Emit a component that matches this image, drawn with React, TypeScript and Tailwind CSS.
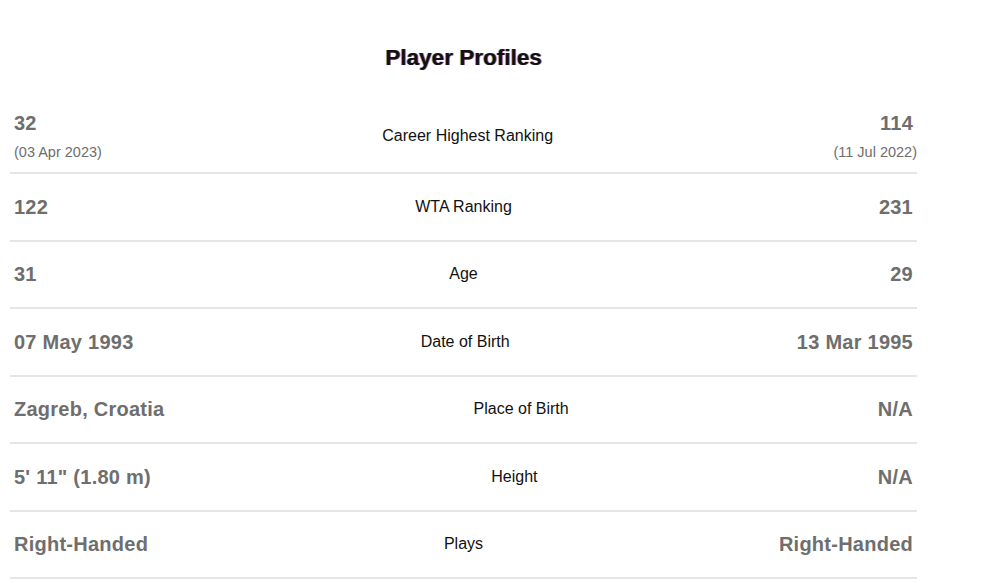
import React from 'react';

type Row = {
  label: string;
  left: string;
  right: string;
  leftSub?: string;
  rightSub?: string;
};

const rows: Row[] = [
  { label: 'Career Highest Ranking', left: '32', right: '114', leftSub: '(03 Apr 2023)', rightSub: '(11 Jul 2022)' },
  { label: 'WTA Ranking', left: '122', right: '231' },
  { label: 'Age', left: '31', right: '29' },
  { label: 'Date of Birth', left: '07 May 1993', right: '13 Mar 1995' },
  { label: 'Place of Birth', left: 'Zagreb, Croatia', right: 'N/A' },
  { label: 'Height', left: '5\' 11" (1.80 m)', right: 'N/A' },
  { label: 'Plays', left: 'Right-Handed', right: 'Right-Handed' },
];

const ProfileRow: React.FC<{ row: Row; first: boolean }> = ({ row, first }) => {
  return (
    <div
      className={
        first
          ? 'flex items-center justify-between border-b-2 border-[#e5e5e5] pt-[19px] pb-[10px]'
          : 'flex items-center justify-between border-b-2 border-[#e5e5e5] py-[18.75px]'
      }
    >
      <div className="flex flex-col items-start">
        <span className="pl-[4px] text-[20px] font-bold leading-[28px] tracking-[0.25px] text-[#6e6e6e]">{row.left}</span>
        {row.leftSub && (
          <span className="mt-[5px] pl-[4px] text-[14.5px] leading-[20px] text-[#6e6e6e]">{row.leftSub}</span>
        )}
      </div>
      <span className="text-[16px] leading-[24px] text-[#111]">{row.label}</span>
      <div className="flex flex-col items-end">
        <span className="pr-[4px] text-[20px] font-bold leading-[28px] tracking-[0.25px] text-[#6e6e6e]">{row.right}</span>
        {row.rightSub && (
          <span className="mt-[5px] text-[14.5px] leading-[20px] text-[#6e6e6e]">{row.rightSub}</span>
        )}
      </div>
    </div>
  );
};

const App: React.FC = () => {
  return (
    <div className="min-h-[583px] bg-white pt-[44px] pl-[10px] font-['Liberation_Sans',Arial,sans-serif]">
      <div className="w-[907px]">
        <h2 className="mb-[18px] text-center text-[22.5px] font-bold leading-[28px] text-[#111] [text-shadow:1px_0_0_rgba(220,0,0,0.55),-1px_0_0_rgba(0,140,255,0.45)]">
          Player Profiles
        </h2>
        {rows.map((row, i) => (
          <ProfileRow key={row.label} row={row} first={i === 0} />
        ))}
      </div>
    </div>
  );
};

export default App;
